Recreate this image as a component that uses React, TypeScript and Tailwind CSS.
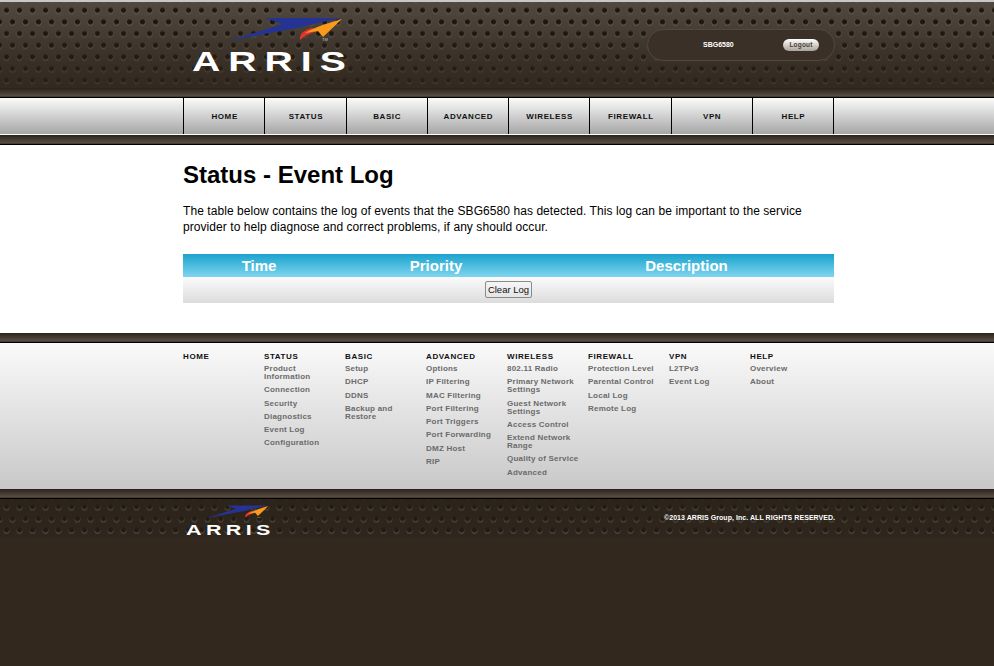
import React from "react";

const FONT = "font-['Liberation_Sans',Arial,sans-serif]";
const DOTS_TOP =
  "bg-[linear-gradient(rgba(52,42,32,0)_30%,rgba(52,42,32,0.55)_100%),radial-gradient(circle_at_50%_50%,#1d1710_0,#1d1710_2px,rgba(29,23,16,0)_3px),radial-gradient(circle_at_50%_50%,#1d1710_0,#1d1710_2px,rgba(29,23,16,0)_3px),radial-gradient(circle_at_50%_50%,rgba(105,95,80,0.6)_0,rgba(105,95,80,0.6)_2.6px,rgba(105,95,80,0)_3.4px),radial-gradient(circle_at_50%_50%,rgba(105,95,80,0.6)_0,rgba(105,95,80,0.6)_2.6px,rgba(105,95,80,0)_3.4px),linear-gradient(#514840,#31281f)] bg-[length:100%_100%,13px_23.33px,13px_23.33px,13px_23.33px,13px_23.33px,100%_100%] bg-[position:0_0,0px_-3.4px,6px_8.3px,0px_-2.4px,6px_9.3px,0_0]";
const DOTS_FOOT =
  "bg-[radial-gradient(circle_at_50%_50%,#241c14_0,#241c14_2px,rgba(36,28,20,0)_3px),radial-gradient(circle_at_50%_50%,#241c14_0,#241c14_2px,rgba(36,28,20,0)_3px),radial-gradient(circle_at_50%_50%,rgba(85,75,62,0.8)_0,rgba(85,75,62,0.8)_2.6px,rgba(85,75,62,0)_3.4px),radial-gradient(circle_at_50%_50%,rgba(85,75,62,0.8)_0,rgba(85,75,62,0.8)_2.6px,rgba(85,75,62,0)_3.4px),linear-gradient(#2c241b,#2f261d)] bg-[length:13px_23.33px,13px_23.33px,13px_23.33px,13px_23.33px,100%_100%] bg-[position:0px_-4px,6px_8px,0px_-3px,6px_9px,0_0]";

function Logo({ w }: { w: number }) {
  return (
    <svg width={w} viewBox="0 0 153 56" className="block overflow-visible">
      <path d="M73 1 L150 1 C135 4 120 7 110 10 L36 24 L91 7 Z" fill="#253494" />
      <path d="M108 23 C107 17 112 13 120 11 L126 14 C118 16 112 19 108 23 Z" fill="#e2352b" />
      <path d="M150 2 L131 20 L126 14 L113 16 C125 9 140 5 150 2 Z" fill="#f99a1c" />
      <text x="130" y="24" fontSize="4" fill="#c9c4bc" fontFamily="Liberation Sans, Arial, sans-serif">TM</text>
      <text
        transform="translate(0 54) scale(1.4 1)"
        fill="#ffffff"
        fontSize="28"
        fontWeight="bold"
        letterSpacing="5.7"
        fontFamily="Liberation Sans, Arial, sans-serif"
      >
        ARRIS
      </text>
    </svg>
  );
}

const NAV = ["HOME", "STATUS", "BASIC", "ADVANCED", "WIRELESS", "FIREWALL", "VPN", "HELP"];

const COLS: { title: string; links: string[] }[] = [
  { title: "HOME", links: [] },
  { title: "STATUS", links: ["Product Information", "Connection", "Security", "Diagnostics", "Event Log", "Configuration"] },
  { title: "BASIC", links: ["Setup", "DHCP", "DDNS", "Backup and Restore"] },
  { title: "ADVANCED", links: ["Options", "IP Filtering", "MAC Filtering", "Port Filtering", "Port Triggers", "Port Forwarding", "DMZ Host", "RIP"] },
  { title: "WIRELESS", links: ["802.11 Radio", "Primary Network Settings", "Guest Network Settings", "Access Control", "Extend Network Range", "Quality of Service", "Advanced"] },
  { title: "FIREWALL", links: ["Protection Level", "Parental Control", "Local Log", "Remote Log"] },
  { title: "VPN", links: ["L2TPv3", "Event Log"] },
  { title: "HELP", links: ["Overview", "About"] },
];

function Stripe() {
  return <div className="h-[10px] bg-[linear-gradient(#2b2219,#574d43_78%,#3a3026_90%,#000_90%)]" />;
}

export default function App() {
  return (
    <div className={`${FONT} min-h-[666px] w-[994px] overflow-hidden bg-[#32281e] text-black`}>
      <div className="h-[2px] bg-[#c8c8c8]" />
      <header className={`h-[86px] ${DOTS_TOP}`}>
        <div className="ml-[192px] flex">
          <div className="mt-[15px]">
            <Logo w={153} />
          </div>
          <div className="ml-[302px] mt-[27px] flex h-[32px] w-[188px] items-center rounded-[16px] border border-[#54483d] bg-[#3b3027]">
            <span className="ml-[55px] w-[80px] text-[7px] font-bold text-white">SBG6580</span>
            <button className="h-[12px] w-[36px] rounded-[6px] bg-[linear-gradient(#fff,#a8a39c)] text-center text-[6.5px] font-bold leading-[12px] tracking-[0.2px] text-[#4a3c30]">
              Logout
            </button>
          </div>
        </div>
      </header>
      <Stripe />
      <nav className="h-[37px] border-b border-white bg-[linear-gradient(#fbfbfb,#a6a6a6)]">
        <div className="ml-[183px] flex h-full w-[651px] border-l border-black">
          {NAV.map((n) => (
            <div
              key={n}
              className="flex h-full flex-1 items-center justify-center border-r border-black pl-[1px] pt-[1px] text-[8px] font-bold tracking-[0.6px] text-[#111]"
            >
              {n}
            </div>
          ))}
        </div>
      </nav>
      <Stripe />
      <main className="h-[188px] bg-white">
        <div className="ml-[183px] w-[651px]">
          <h1 className="pt-[15px] text-[24px] font-bold leading-[30px]">Status - Event Log</h1>
          <p className="mt-[13px] text-[12px] leading-[16px] tracking-[0.07px]">
            The table below contains the log of events that the SBG6580 has detected. This log can be important to the service provider to help diagnose and correct problems, if any should occur.
          </p>
          <div className="mt-[19px]">
            <div className="grid h-[23px] grid-cols-[152px_202px_1fr] items-center bg-[linear-gradient(#19a3cd,#80d5ef)] pt-[1px] text-center text-[15px] font-bold text-white">
              <span>Time</span>
              <span>Priority</span>
              <span className="pl-[2px]">Description</span>
            </div>
            <div className="flex h-[26px] items-center justify-center bg-[linear-gradient(#fbfbfb,#dcdcdc)] pb-[1px]">
              <button className="h-[17px] w-[47px] whitespace-nowrap rounded-[2px] border border-[#8a8a8a] bg-[linear-gradient(#f6f6f6,#e4e4e4)] p-0 text-center text-[9.5px] leading-[14px] text-[#111]">
                Clear Log
              </button>
            </div>
          </div>
        </div>
      </main>
      <Stripe />
      <footer className="h-[146px] bg-[linear-gradient(#fafafa,#c8c8c8)]">
        <div className="ml-[183px] flex pt-[9px]">
          {COLS.map((c) => (
            <div key={c.title} className="w-[81px] pr-[2px]">
              <div className="text-[8px] font-bold leading-[10px] tracking-[0.6px] text-[#111]">{c.title}</div>
              <ul className="mt-[3px] flex flex-col gap-[5.3px]">
                {c.links.map((l) => (
                  <li key={l} className="text-[8px] font-bold leading-[8px] tracking-[0.22px] text-[#6b6b6b]">
                    {l}
                  </li>
                ))}
              </ul>
            </div>
          ))}
        </div>
      </footer>
      <Stripe />
      <div className={`h-[39px] ${DOTS_FOOT}`}>
        <div className="ml-[186px] flex">
          <div className="mt-[6px]">
            <Logo w={84} />
          </div>
          <div className="ml-[394px] mt-[14px] text-[7px] font-bold leading-[10px] tracking-[0.05px] text-white">
            ©2013 ARRIS Group, Inc. ALL RIGHTS RESERVED.
          </div>
        </div>
      </div>
    </div>
  );
}
